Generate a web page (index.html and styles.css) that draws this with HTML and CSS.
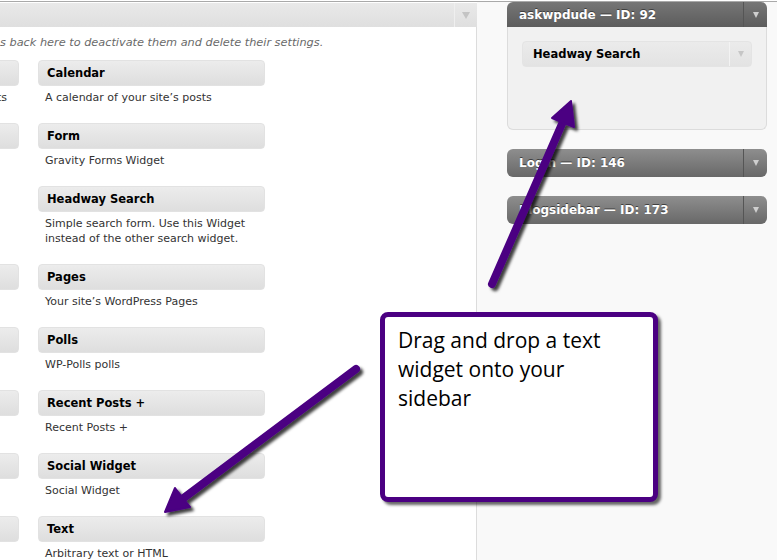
FILE: index.html
```html
<!DOCTYPE html>
<html>
<head>
<meta charset="utf-8">
<link rel="stylesheet" href="styles.css">
</head>
<body>
<div class="topline"></div>
<div class="page">
  <section class="avail">
    <div class="avail-head"><span class="toggle"><i class="tri"></i></span></div>
    <div class="avail-body">
      <p class="hint">s back here to deactivate them and delete their settings.</p>
      <div class="widget-grid">
        <div class="widget"><div class="w-btn">Archives</div><p class="w-desc">A monthly archive of your site’s posts</p></div>
        <div class="widget"><div class="w-btn">Calendar</div><p class="w-desc">A calendar of your site’s posts</p></div>

        <div class="widget"><div class="w-btn">Categories</div><p class="w-desc">A list or dropdown of categories</p></div>
        <div class="widget"><div class="w-btn">Form</div><p class="w-desc">Gravity Forms Widget</p></div>

        <div class="widget empty"></div>
        <div class="widget"><div class="w-btn">Headway Search</div><p class="w-desc">Simple search form. Use this Widget instead of the other search widget.</p></div>

        <div class="widget"><div class="w-btn">Meta</div><p class="w-desc">Log in/out, admin</p></div>
        <div class="widget"><div class="w-btn">Pages</div><p class="w-desc">Your site’s WordPress Pages</p></div>

        <div class="widget"><div class="w-btn">Recent Comments</div><p class="w-desc">The most recent comments</p></div>
        <div class="widget"><div class="w-btn">Polls</div><p class="w-desc">WP-Polls polls</p></div>

        <div class="widget"><div class="w-btn">RSS</div><p class="w-desc">Entries from any feed</p></div>
        <div class="widget"><div class="w-btn">Recent Posts +</div><p class="w-desc">Recent Posts +</p></div>

        <div class="widget"><div class="w-btn">Search</div><p class="w-desc">A search form for your site</p></div>
        <div class="widget"><div class="w-btn">Social Widget</div><p class="w-desc">Social Widget</p></div>

        <div class="widget"><div class="w-btn">Tag Cloud</div><p class="w-desc">Your most used tags in cloud format</p></div>
        <div class="widget"><div class="w-btn">Text</div><p class="w-desc">Arbitrary text or HTML</p></div>
      </div>
    </div>
  </section>
  <aside class="sidebars">
    <div class="sb open">
      <div class="sb-head"><span class="sb-title">askwpdude — ID: 92</span><span class="sb-toggle"><i class="tri"></i></span></div>
      <div class="sb-body">
        <div class="sb-widget"><span class="sbw-title">Headway Search</span><span class="sbw-toggle"><i class="tri"></i></span></div>
      </div>
    </div>
    <div class="sb closed">
      <div class="sb-head"><span class="sb-title">Login — ID: 146</span><span class="sb-toggle"><i class="tri"></i></span></div>
    </div>
    <div class="sb closed">
      <div class="sb-head"><span class="sb-title">Blogsidebar — ID: 173</span><span class="sb-toggle"><i class="tri"></i></span></div>
    </div>
  </aside>
</div>

<div class="callout">Drag and drop a text widget onto your sidebar</div>

<svg class="arrows" width="777" height="560" viewBox="0 0 777 560">
  <defs>
    <filter id="sh" x="-20%" y="-20%" width="140%" height="140%">
      <feDropShadow dx="3" dy="3" stdDeviation="1.6" flood-color="#000" flood-opacity="0.75"/>
    </filter>
  </defs>
  <g filter="url(#sh)" fill="#4b0082" stroke="#4b0082">
    <line x1="492" y1="284" x2="565" y2="117" stroke-width="8" stroke-linecap="round"/>
    <polygon points="571,101 574,127 552,118" stroke-width="2" stroke-linejoin="round"/>
    <line x1="356" y1="369" x2="181" y2="500" stroke-width="8" stroke-linecap="round"/>
    <polygon points="165,512 175,488 190,507" stroke-width="2" stroke-linejoin="round"/>
  </g>
</svg>
</body>
</html>
```
FILE: styles.css
```css
html, body {
  margin: 0;
  padding: 0;
  background: #ffffff;
}
body {
  width: 777px;
  height: 560px;
  overflow: hidden;
  position: relative;
  font-family: "DejaVu Sans", Verdana, sans-serif;
  color: #333;
}
.topline {
  margin-top: 1px;
  height: 1px;
  background: #a9a9a9;
}
.page {
  display: flex;
  height: 558px;
}
.avail {
  width: 477px;
  flex: none;
  display: flex;
  flex-direction: column;
  overflow: hidden;
}
.avail-head {
  margin-top: 1px;
  height: 24px;
  flex: none;
  background: linear-gradient(to bottom, #e9e9e9, #dfdfdf);
  display: flex;
  justify-content: flex-end;
}
.toggle {
  width: 22px;
  border-left: 1px solid #efefef;
  display: flex;
  align-items: center;
  justify-content: center;
}
.tri {
  display: block;
  width: 0;
  height: 0;
  border-left: 4px solid transparent;
  border-right: 4px solid transparent;
  border-top: 7px solid #c4c4c4;
}
.avail-body {
  flex: 1;
  background: #fff;
  border-right: 1px solid #dcdcdc;
}
.hint {
  margin: 9px 0 0 0;
  font-size: 11.3px;
  line-height: 14px;
  font-style: italic;
  color: #6a6a6a;
  white-space: nowrap;
}
.widget-grid {
  margin: 10px 0 0 -208px;
  display: grid;
  grid-template-columns: 227px 227px;
  column-gap: 19px;
  row-gap: 18px;
}
.widget {
  min-width: 0;
}
.w-btn {
  height: 26px;
  box-sizing: border-box;
  border-radius: 4px;
  background: linear-gradient(to bottom, #ececec, #dedede);
  border: 1px solid #e2e2e2;
  padding: 0 8px;
  font-size: 11.5px;
  font-weight: bold;
  line-height: 24px;
  color: #000;
  white-space: nowrap;
}
.w-desc {
  margin: 4px 0 0 0;
  padding: 0 7px;
  font-size: 11px;
  line-height: 15px;
  color: #333;
  white-space: nowrap;
}
.widget:nth-child(2n) .w-desc {
  white-space: normal;
}
.sidebars {
  flex: 1;
  background: #f9f9f9;
  padding: 0 10px 0 30px;
  display: flex;
  flex-direction: column;
  gap: 19px;
}
.sb-head {
  height: 25px;
  display: flex;
  align-items: stretch;
  border-radius: 6px 6px 0 0;
  background: linear-gradient(to bottom, #767676, #5c5c5c);
}
.sb.closed .sb-head {
  height: 28px;
  border-radius: 6px;
  background: linear-gradient(to bottom, #8e8e8e, #686868);
}
.sb-title {
  flex: 1;
  padding-left: 12px;
  font-size: 12px;
  font-weight: bold;
  color: #fff;
  display: flex;
  align-items: center;
  text-shadow: 0 -1px 0 #3f3f3f;
  white-space: nowrap;
}
.sb-toggle {
  width: 23px;
  border-left: 1px solid #555;
  display: flex;
  align-items: center;
  justify-content: center;
}
.sb-toggle .tri {
  border-top-color: #cfcfcf;
  border-left-width: 3.5px;
  border-right-width: 3.5px;
  border-top-width: 6px;
}
.sb-body {
  height: 103px;
  box-sizing: border-box;
  background: #f1f1f1;
  border: 1px solid #dcdcdc;
  border-top: none;
  border-radius: 0 0 6px 6px;
  padding: 14px 14px 0 14px;
}
.sb-widget {
  height: 26px;
  box-sizing: border-box;
  display: flex;
  border-radius: 4px;
  background: linear-gradient(to bottom, #ebebeb, #e3e3e3);
  border: 1px solid #e4e4e4;
}
.sbw-title {
  flex: 1;
  padding-left: 10px;
  font-size: 11.5px;
  font-weight: bold;
  color: #000;
  line-height: 24px;
}
.sbw-toggle {
  width: 21px;
  border-left: 1px solid #f3f3f3;
  display: flex;
  align-items: center;
  justify-content: center;
}
.sbw-toggle .tri {
  border-top-color: #c6c6c6;
  border-left-width: 3.5px;
  border-right-width: 3.5px;
  border-top-width: 6px;
}
.callout {
  position: absolute;
  left: 380px;
  top: 312px;
  width: 278px;
  height: 190px;
  box-sizing: border-box;
  border: 5px solid #4b0082;
  border-radius: 8px;
  background: #fff;
  box-shadow: 3px 3px 3px rgba(0, 0, 0, 0.6);
  padding: 9px 22px 0 13px;
  font-family: "Open Sans", "Noto Sans", sans-serif;
  font-size: 21px;
  line-height: 29px;
  color: #000;
}
.arrows {
  position: absolute;
  left: 0;
  top: 0;
  pointer-events: none;
}
```
